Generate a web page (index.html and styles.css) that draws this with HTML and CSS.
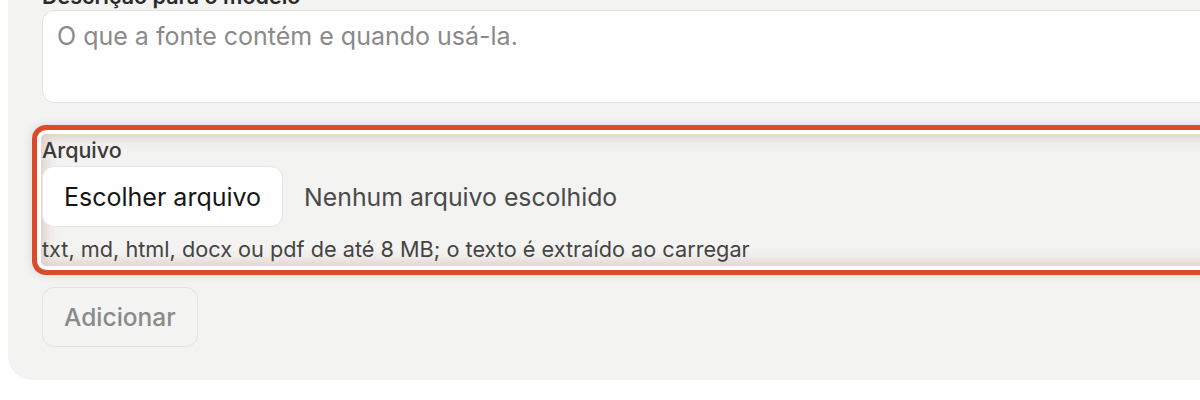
FILE: index.html
```html
<!DOCTYPE html>
<html lang="pt-BR">
<head>
<meta charset="utf-8">
<title>Adicionar fonte</title>
<link rel="stylesheet" href="styles.css">
</head>
<body>
<div class="panel">
  <label class="field-label desc-label">Descrição para o modelo</label>
  <textarea class="desc" placeholder="O que a fonte contém e quando usá-la."></textarea>
  <div class="field highlight">
    <div class="field-label">Arquivo</div>
    <div class="file-row">
      <button class="file-btn">Escolher arquivo</button>
      <span class="file-name">Nenhum arquivo escolhido</span>
    </div>
    <div class="hint">txt, md, html, docx ou pdf de até 8 MB; o texto é extraído ao carregar</div>
  </div>
  <button class="add-btn" disabled>Adicionar</button>
</div>
</body>
</html>
```
FILE: styles.css
```css
html, body {
  margin: 0;
  padding: 0;
  background: #ffffff;
  overflow: hidden;
  font-family: Inter, "Noto Sans", sans-serif;
}

.panel {
  margin: -40px -60px 0 8px;
  padding: 25px 34px 33px 34px;
  background: #f3f3f1;
  border-radius: 24px;
  display: flex;
  flex-direction: column;
  align-items: flex-start;
}

.field-label {
  display: block;
  font-size: 21.5px;
  line-height: 24px;
  color: #3a3a3a;
  font-weight: 500;
}

.desc-label {
  font-weight: 600;
  color: #2a2a2a;
  line-height: 22px;
  margin-bottom: 3px;
}

.desc {
  box-sizing: border-box;
  width: 100%;
  height: 93px;
  border: 1px solid #e2e2df;
  border-radius: 12px;
  background: #ffffff;
  padding: 10px 14px;
  font-family: Inter, "Noto Sans", sans-serif;
  font-size: 25px;
  line-height: 30px;
  resize: none;
  color: #222;
  outline: none;
}

.desc::placeholder {
  color: #8a8a8a;
}

.highlight {
  box-sizing: border-box;
  align-self: stretch;
  margin: 22px 0 0 -10px;
  border: 5px solid #db4a2b;
  border-radius: 14px;
  padding: 8px 5px 9px 5px;
  box-shadow: 0 0 10px rgba(0, 0, 0, 0.12),
              inset 0 0 0 4px #ffffff,
              inset 0 0 14px 7px rgba(175, 120, 110, 0.35);
}

.highlight .field-label {
  margin-bottom: 4px;
}

.file-row {
  display: flex;
  align-items: center;
  gap: 21px;
}

.file-btn {
  height: 61px;
  padding: 0 21px;
  background: #ffffff;
  border: 1px solid #e6e6e3;
  border-radius: 12px;
  font-family: Inter, "Noto Sans", sans-serif;
  font-size: 25px;
  color: #161616;
}

.file-name {
  font-size: 24.8px;
  color: #4a4a4a;
}

.hint {
  margin-top: 10px;
  font-size: 21.7px;
  line-height: 24px;
  color: #444444;
}

.add-btn {
  margin-top: 12px;
  height: 60px;
  padding: 0 21px;
  background: #f4f4f2;
  border: 1px solid #e2e2df;
  border-radius: 12px;
  font-family: Inter, "Noto Sans", sans-serif;
  font-size: 24.5px;
  font-weight: 500;
  color: #8a8a8a;
}
```
